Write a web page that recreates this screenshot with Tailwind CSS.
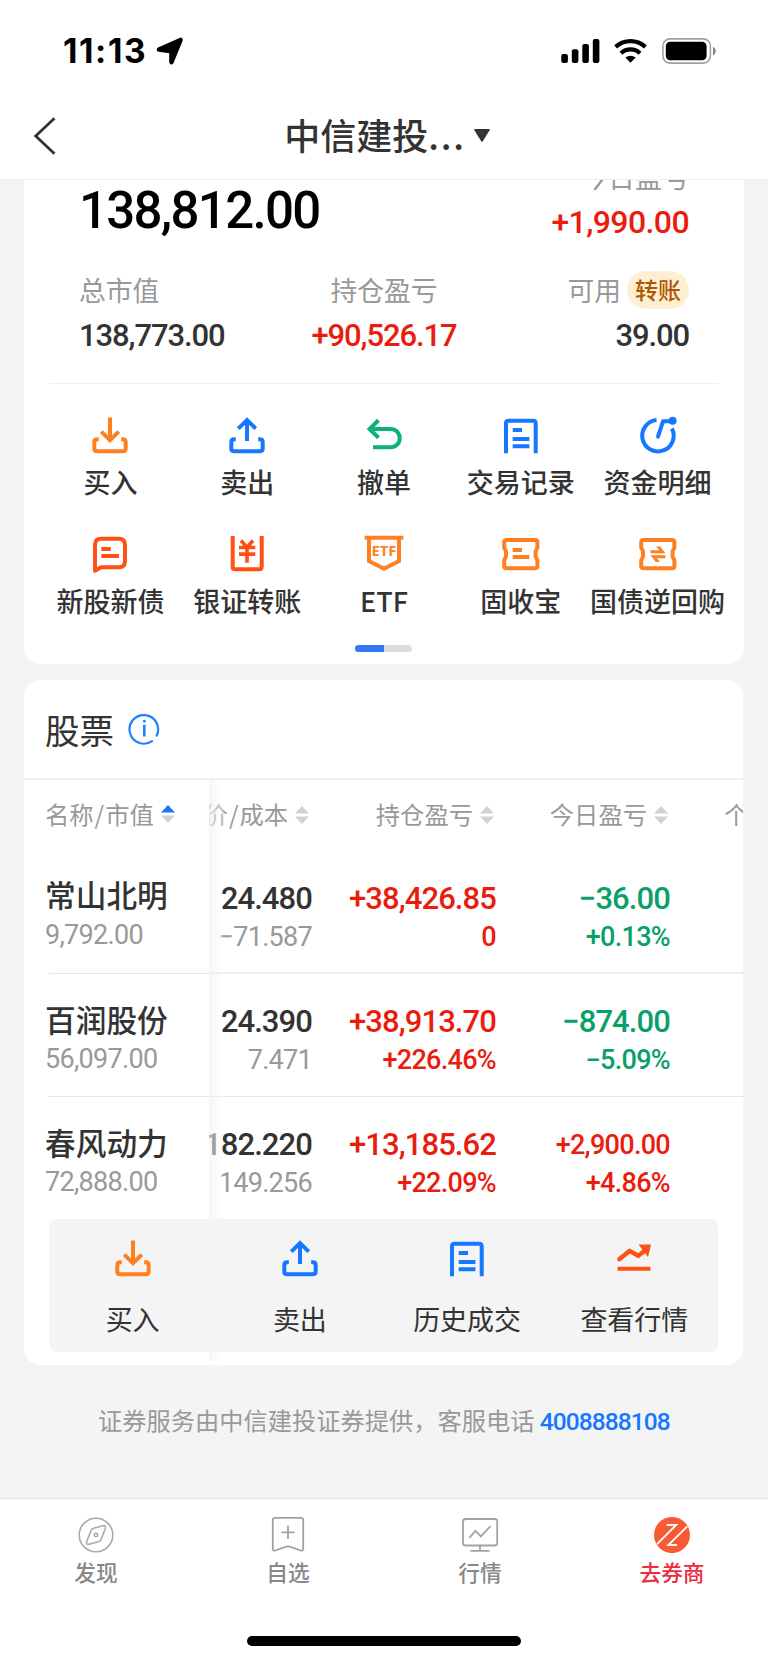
<!DOCTYPE html>
<html lang="zh-CN">
<head>
    <meta charset="UTF-8">
    <meta name="viewport" content="width=device-width, initial-scale=1.0">
    <title>中信建投</title>
    <script src="https://cdn.jsdelivr.net/npm/@tailwindcss/browser@4"></script>
</head>
<body class="bg-[#f4f4f4] text-[#333] font-['Noto_Sans_CJK_SC',sans-serif]">

<!-- Shared icons -->
<svg class="hidden">
    <symbol id="icon-buy" viewBox="0 0 40 40">
        <g fill="none" stroke="#ff8020" stroke-width="4">
            <path d="M20 2.5V25"/>
            <path d="M11.3 16.6L20 25.2L28.7 16.6"/>
            <path d="M8.8 24.3H7.3Q4.3 24.3 4.3 27.3V33.5Q4.3 36.3 7.2 36.3H32.8Q35.7 36.3 35.7 33.5V27.3Q35.7 24.3 32.7 24.3H31.2"/>
        </g>
    </symbol>
    <symbol id="icon-sell" viewBox="0 0 40 40">
        <g fill="none" stroke="#1677ff" stroke-width="4">
            <path d="M20 26V5"/>
            <path d="M11.3 13.6L20 5L28.7 13.6"/>
            <path d="M8.8 24.3H7.3Q4.3 24.3 4.3 27.3V33.5Q4.3 36.3 7.2 36.3H32.8Q35.7 36.3 35.7 33.5V27.3Q35.7 24.3 32.7 24.3H31.2"/>
        </g>
    </symbol>
    <symbol id="icon-record" viewBox="0 0 40 40">
        <g fill="none" stroke="#1677ff" stroke-width="4">
            <path d="M5 38.3V8.2Q5 5.7 7.5 5.7H32.3Q34.7 5.7 34.7 8.2V38.3"/>
            <path d="M11.7 15H21M11.7 24H28.4M11.7 31.2H28.4"/>
        </g>
    </symbol>
    <symbol id="icon-sort" viewBox="0 0 14 18">
        <path d="M7 0L14 7.5H0z"/>
        <path d="M0 10.5H14L7 18z" fill="#d2d2d2"/>
    </symbol>
</svg>

<div class="w-[768px] h-[1663px] flex flex-col overflow-hidden">

    <!-- Status bar -->
    <header class="bg-white h-[180px] shrink-0 border-b border-[#eeeeee]">
        <div class="h-[102px] pl-[63px] pr-[52px] flex items-center justify-between text-black">
            <div class="flex items-center gap-[9px]">
                <span class="font-['Inter'] font-bold text-[33.5px] leading-10 tracking-[1.6px]">11:13</span>
                <svg class="w-7 h-7" viewBox="0 0 28 28"><path d="M3 12.5L24.5 3L15.5 25V14.2Z" stroke="#000" stroke-width="4.6" stroke-linejoin="round"/></svg>
            </div>
            <div class="flex items-center">
                <svg class="w-[39px] h-6" viewBox="0 0 39 24">
                    <rect x="0.3" y="15" width="6.6" height="9" rx="2"/>
                    <rect x="10.8" y="10.3" width="6.6" height="13.7" rx="2"/>
                    <rect x="21.3" y="5" width="6.6" height="19" rx="2"/>
                    <rect x="31.8" y="0" width="6.6" height="24" rx="2"/>
                </svg>
                <svg class="w-[33px] h-6 ml-[14px]" viewBox="0 0 33 24" fill="none" stroke="#000">
                    <path d="M1.6 7.9Q8 2.2 16.5 2.2T31.4 7.9" stroke-width="4.2"/>
                    <path d="M7 14.2Q11 10.3 16.5 10.3T26 14.2" stroke-width="4.2"/>
                    <path d="M11.3 18.5Q16.5 14.8 21.7 18.5L16.5 23.8z" fill="#000" stroke="none"/>
                </svg>
                <svg class="w-[54px] h-[26px] ml-[15px]" viewBox="0 0 54 26">
                    <rect x="0.9" y="0.9" width="47.5" height="24.2" rx="7" fill="none" stroke="#a0a0a0" stroke-width="1.6"/>
                    <rect x="3.8" y="3.8" width="40.8" height="18.4" rx="4.5"/>
                    <path d="M51 8.5Q53.8 10 53.8 13T51 17.5z" fill="#888"/>
                </svg>
            </div>
        </div>
        <div class="h-[67px] px-[33px] grid grid-cols-[1fr_auto_1fr] items-center">
            <svg class="w-[23px] h-[38px]" viewBox="0 0 23 38" fill="none" stroke="#333" stroke-width="2.8"><path d="M21.5 1.3L2.7 19L21.5 36.7"/></svg>
            <h1 class="flex items-center pl-[6px] pb-[3px] text-[36px] leading-[50px] font-medium">
                <span>中信建投</span><span class="tracking-[1.7px]">...</span>
                <svg class="w-4 h-[13px] ml-2 mt-[2px]" viewBox="0 0 16 13" fill="#333"><path d="M1 0H15Q16.3 0 15.6 1.2L8.8 12.3Q8 13.3 7.2 12.3L0.4 1.2Q-0.3 0 1 0z"/></svg>
            </h1>
        </div>
    </header>

    <main class="h-[1318px] shrink-0 px-6 overflow-hidden">

        <!-- Account summary -->
        <section class="h-[484px] bg-white rounded-b-2xl">
            <div class="h-[61px] px-[55px] flex justify-between">
                <div class="h-[62px] leading-[62px] text-[51px] tracking-[-1.7px] font-medium text-black font-['Roboto']">138,812.00</div>
                <div class="-mt-[17px] text-right">
                    <div class="h-[27px] leading-[27px] text-[27px] text-[#999]">今日盈亏</div>
                    <div class="mt-[12px] h-10 leading-10 text-[32px] tracking-[-0.6px] font-medium text-[#ea1c0d] font-['Roboto']">+1,990.00</div>
                </div>
            </div>

            <div class="mt-[29px] px-[55px] grid grid-cols-3">
                <div>
                    <div class="h-10 leading-10 text-[26.8px] text-[#999]">总市值</div>
                    <div class="mt-[11px] h-[30px] leading-[30px] text-[31px] tracking-[-1.1px] font-medium font-['Roboto']">138,773.00</div>
                </div>
                <div class="text-center">
                    <div class="h-10 leading-10 text-[26.8px] text-[#999]">持仓盈亏</div>
                    <div class="mt-[11px] h-[30px] leading-[30px] text-[31px] tracking-[-1.1px] font-medium text-[#ea1c0d] font-['Roboto']">+90,526.17</div>
                </div>
                <div class="text-right">
                    <div class="h-10 flex items-center justify-end gap-[6px] leading-10 text-[26.8px] text-[#999]">
                        <span>可用</span>
                        <span class="w-[62px] h-[38px] leading-[36px] rounded-full bg-[#feefd3] text-center text-[23px] font-medium text-[#ad5700]">转账</span>
                    </div>
                    <div class="mt-[11px] h-[30px] leading-[30px] text-[31px] tracking-[-1.1px] font-medium font-['Roboto']">39.00</div>
                </div>
            </div>

            <div class="mt-[32px] mx-[25px] h-px bg-[#eeeeee]"></div>

            <div class="mt-[31px] mx-[18px] grid grid-cols-5 gap-y-[37px] text-[27px] leading-[31px] font-medium whitespace-nowrap">
                <div class="flex flex-col items-center gap-[11px]">
                    <svg class="w-10 h-10"><use href="#icon-buy"/></svg>
                    <span>买入</span>
                </div>
                <div class="flex flex-col items-center gap-[11px]">
                    <svg class="w-10 h-10"><use href="#icon-sell"/></svg>
                    <span>卖出</span>
                </div>
                <div class="flex flex-col items-center gap-[11px]">
                    <svg class="w-10 h-10" viewBox="0 0 40 40" fill="none" stroke="#0eb07b" stroke-width="4">
                        <path d="M14.5 5.3L5.6 14L14.5 22.7"/>
                        <path d="M6 14H26.6A9.15 9.15 0 0 1 26.6 32.3H9"/>
                    </svg>
                    <span>撤单</span>
                </div>
                <div class="flex flex-col items-center gap-[11px]">
                    <svg class="w-10 h-10"><use href="#icon-record"/></svg>
                    <span>交易记录</span>
                </div>
                <div class="flex flex-col items-center gap-[11px]">
                    <svg class="w-10 h-10" viewBox="0 0 40 40" fill="none" stroke="#1677ff" stroke-width="4">
                        <path d="M18.5 5.1A15.7 15.7 0 1 0 33.9 13.5"/>
                        <path d="M20 21.7L25 6.3H34" stroke-linecap="round" stroke-linejoin="round"/>
                        <circle cx="34.6" cy="5.8" r="4" fill="#1677ff" stroke="none"/>
                    </svg>
                    <span>资金明细</span>
                </div>
                <div class="flex flex-col items-center gap-[11px]">
                    <svg class="w-10 h-10" viewBox="0 0 40 40" fill="none" stroke="#ff5015" stroke-width="4">
                        <path d="M5 36.7V11Q5 4.7 11 4.7H29Q35 4.7 35 11V27Q35 33.3 29 33.3H11Z" stroke-linejoin="round"/>
                        <path d="M11.3 15H20.7M11.3 22H29"/>
                    </svg>
                    <span>新股新债</span>
                </div>
                <div class="flex flex-col items-center gap-[11px]">
                    <svg class="w-10 h-10" viewBox="0 0 40 40" fill="none" stroke="#ff5015" stroke-width="4">
                        <path d="M5.7 2V32.7Q5.7 35.3 8.3 35.3H32.1Q34.7 35.3 34.7 32.7V2"/>
                        <path d="M14 6.5L20 13.5L26 6.5M20 13V28.7M12 13.5H28.3M12 20.2H28.3" stroke-width="3.7"/>
                    </svg>
                    <span>银证转账</span>
                </div>
                <div class="flex flex-col items-center gap-[11px]">
                    <svg class="w-10 h-10" viewBox="0 0 40 40" fill="none" stroke="#ff8020" stroke-width="4">
                        <path d="M0.7 3.8H39.3"/>
                        <path d="M5 4V27L20 34.7L35 27V4"/>
                        <text x="20" y="22" text-anchor="middle" textLength="25" lengthAdjust="spacingAndGlyphs" fill="#ff8020" stroke="none" class="font-['Open_Sans'] font-bold text-[13.5px]">ETF</text>
                    </svg>
                    <span>ETF</span>
                </div>
                <div class="flex flex-col items-center gap-[11px]">
                    <svg class="w-10 h-10" viewBox="0 0 40 40" fill="none" stroke="#ff8020" stroke-width="4" stroke-linejoin="round">
                        <path d="M5.6 6H34Q36.4 6 36.4 8.4V13.6L34.6 17.5V22.5L36.4 26.4V32Q36.4 34.3 34 34.3H5.6Q3.2 34.3 3.2 32V26.4L5 22.5V17.5L3.2 13.6V8.4Q3.2 6 5.6 6z"/>
                        <path d="M11.7 16H21M11.7 23H28.4"/>
                    </svg>
                    <span>固收宝</span>
                </div>
                <div class="flex flex-col items-center gap-[11px]">
                    <svg class="w-10 h-10" viewBox="0 0 40 40" fill="none" stroke="#ff8020" stroke-width="4" stroke-linejoin="round">
                        <path d="M5.6 6H34Q36.4 6 36.4 8.4V13.6L34.6 17.5V22.5L36.4 26.4V32Q36.4 34.3 34 34.3H5.6Q3.2 34.3 3.2 32V26.4L5 22.5V17.5L3.2 13.6V8.4Q3.2 6 5.6 6z"/>
                        <path d="M12.5 16.2H21.3L18 12.5H22.3L27.5 19.3H12.5zM27.5 24.3H18.7L22 28H17.7L12.5 21.2H27.5z" fill="#ff8020" stroke="none"/>
                    </svg>
                    <span>国债逆回购</span>
                </div>
            </div>

            <div class="mt-[29px] ml-[331px] w-[57px] h-[7px] rounded-sm bg-[#dddddd] overflow-hidden">
                <div class="w-[29px] h-full bg-[#3478f6]"></div>
            </div>
        </section>

        <!-- Holdings -->
        <section class="mt-4 w-[719px] h-[685px] bg-white rounded-2xl">
            <div class="h-[98px] pl-[21px] flex items-center gap-[14px]">
                <h2 class="text-[34.5px] leading-[50px]">股票</h2>
                <svg class="w-8 h-8" viewBox="0 0 32 32" fill="none" stroke="#1f80ff" stroke-width="2.2">
                    <path d="M24 28.1A14.3 14.3 0 1 1 28.7 22.6" stroke-linecap="round"/>
                    <path d="M16.3 11.8V23.5" stroke-width="2.6"/>
                    <circle cx="16.3" cy="8.2" r="1.4" fill="#1f80ff" stroke="none"/>
                </svg>
            </div>

            <div class="relative h-[583px] border-t-2 border-[#f0f0f0] flex">
                <!-- Fixed name column -->
                <div class="w-[185px] shrink-0">
                    <div class="h-[72px] pb-[4px] pl-[21px] flex items-center gap-[7px] text-[24.3px] text-[#999]">
                        <span class="leading-[30px]">名称<span class="px-[1px]">/</span>市值</span>
                        <svg class="w-[14px] h-[18px]" fill="#1677ff"><use href="#icon-sort"/></svg>
                    </div>
                    <div class="h-[121px] pl-[21px] pt-[22px]">
                        <div class="h-10 leading-10 text-[30.7px] font-medium">常山北明</div>
                        <div class="h-[38px] leading-[38px] pt-[2px] text-[27px] tracking-[-0.7px] text-[#999] font-['Roboto']">9,792.00</div>
                    </div>
                    <div class="ml-[25px] h-px bg-[#e6e6e6]"></div>
                    <div class="h-[122px] pl-[21px] pt-[25px]">
                        <div class="h-10 leading-10 text-[30.7px] font-medium">百润股份</div>
                        <div class="h-[38px] leading-[38px] pt-px text-[27px] tracking-[-0.7px] text-[#999] font-['Roboto']">56,097.00</div>
                    </div>
                    <div class="ml-[25px] h-px bg-[#e6e6e6]"></div>
                    <div class="pl-[21px] pt-[25px]">
                        <div class="h-10 leading-10 text-[30.7px] font-medium">春风动力</div>
                        <div class="h-[38px] leading-[38px] pt-px text-[27px] tracking-[-0.7px] text-[#999] font-['Roboto']">72,888.00</div>
                    </div>
                </div>

                <!-- Scrolled columns -->
                <div class="w-[534px] shrink-0 overflow-hidden">
                    <div class="h-[72px] pb-[4px] flex items-center text-[24.3px] leading-[30px] text-[#999] whitespace-nowrap">
                        <div class="w-[100px] shrink-0 flex items-center justify-end gap-[7px]"><span>价<span class="px-[1px]">/</span>成本</span><svg class="w-[14px] h-[18px] mt-[2px] shrink-0" fill="#d2d2d2"><use href="#icon-sort"/></svg></div>
                        <div class="w-[185px] shrink-0 flex items-center justify-end gap-[7px]"><span>持仓盈亏</span><svg class="w-[14px] h-[18px] mt-[2px] shrink-0" fill="#d2d2d2"><use href="#icon-sort"/></svg></div>
                        <div class="w-[174px] shrink-0 flex items-center justify-end gap-[7px]"><span>今日盈亏</span><svg class="w-[14px] h-[18px] mt-[2px] shrink-0" fill="#d2d2d2"><use href="#icon-sort"/></svg></div>
                        <div class="pl-[56px] shrink-0">个股</div>
                    </div>
                    <div class="h-[120px] pt-[28px] flex font-['Roboto'] tracking-[-0.9px] text-right font-medium">
                        <div class="w-[103px] shrink-0 flex flex-col items-end">
                            <div class="h-[38px] leading-[38px] text-[31px]">24.480</div>
                            <div class="h-[38px] leading-[38px] text-[27px] tracking-[-0.7px] font-normal text-[#999]">−71.587</div>
                        </div>
                        <div class="w-[184px] shrink-0 text-[#ea1c0d]">
                            <div class="h-[38px] leading-[38px] text-[31px]">+38,426.85</div>
                            <div class="h-[38px] leading-[38px] text-[27px] tracking-[-0.7px]">0</div>
                        </div>
                        <div class="w-[174px] shrink-0 text-[#0b9f6a]">
                            <div class="h-[38px] leading-[38px] text-[31px]">−36.00</div>
                            <div class="h-[38px] leading-[38px] text-[27px] tracking-[-0.7px]">+0.13%</div>
                        </div>
                    </div>
                    <div class="h-[2px] bg-[#ececec]"></div>
                    <div class="h-[122px] pt-[29px] flex font-['Roboto'] tracking-[-0.9px] text-right font-medium">
                        <div class="w-[103px] shrink-0 flex flex-col items-end">
                            <div class="h-[38px] leading-[38px] text-[31px]">24.390</div>
                            <div class="h-[38px] leading-[38px] text-[27px] tracking-[-0.7px] font-normal text-[#999]">7.471</div>
                        </div>
                        <div class="w-[184px] shrink-0 text-[#ea1c0d]">
                            <div class="h-[38px] leading-[38px] text-[31px]">+38,913.70</div>
                            <div class="h-[38px] leading-[38px] text-[27px] tracking-[-0.7px]">+226.46%</div>
                        </div>
                        <div class="w-[174px] shrink-0 text-[#0b9f6a]">
                            <div class="h-[38px] leading-[38px] text-[31px]">−874.00</div>
                            <div class="h-[38px] leading-[38px] text-[27px] tracking-[-0.7px]">−5.09%</div>
                        </div>
                    </div>
                    <div class="h-px bg-[#e6e6e6]"></div>
                    <div class="pt-[29px] flex font-['Roboto'] tracking-[-0.9px] text-right font-medium">
                        <div class="w-[103px] shrink-0 flex flex-col items-end">
                            <div class="h-[38px] leading-[38px] text-[31px]">182.220</div>
                            <div class="h-[38px] leading-[38px] text-[27px] tracking-[-0.7px] font-normal text-[#999]">149.256</div>
                        </div>
                        <div class="w-[184px] shrink-0 text-[#ea1c0d]">
                            <div class="h-[38px] leading-[38px] text-[31px]">+13,185.62</div>
                            <div class="h-[38px] leading-[38px] text-[27px] tracking-[-0.7px]">+22.09%</div>
                        </div>
                        <div class="w-[174px] shrink-0 text-[#ea1c0d]">
                            <div class="h-[38px] leading-[38px] text-[27px] tracking-[-0.7px]">+2,900.00</div>
                            <div class="h-[38px] leading-[38px] text-[27px] tracking-[-0.7px]">+4.86%</div>
                        </div>
                    </div>
                </div>

                <!-- Edge shadow of the fixed column -->
                <div class="absolute left-[185px] top-0 w-[14px] h-full bg-linear-to-r from-[#f2f2f2]/70 to-white/30"></div>

                <!-- Row menu, opened over the table -->
                <div class="absolute left-[25px] top-[439px] w-[669px] h-[133px] rounded-lg bg-[#f4f4f4] grid grid-cols-4 pt-[19px] text-[27px] leading-[36px]">
                    <div class="flex flex-col items-center gap-[23px]">
                        <svg class="w-10 h-10"><use href="#icon-buy"/></svg>
                        <span>买入</span>
                    </div>
                    <div class="flex flex-col items-center gap-[23px]">
                        <svg class="w-10 h-10"><use href="#icon-sell"/></svg>
                        <span>卖出</span>
                    </div>
                    <div class="flex flex-col items-center gap-[23px]">
                        <svg class="w-10 h-10"><use href="#icon-record"/></svg>
                        <span>历史成交</span>
                    </div>
                    <div class="flex flex-col items-center gap-[23px]">
                        <svg class="w-10 h-10" viewBox="0 0 40 40" fill="none" stroke="#ff5015" stroke-width="4">
                            <path d="M5.3 21.2L15.7 12.8L24.3 17.9L33 10.8" stroke-width="4.4" stroke-linecap="round" stroke-linejoin="round"/>
                            <path d="M24.5 6.6H37L34 19z" fill="#ff5015" stroke="none"/>
                            <path d="M3.5 30.8H36.5"/>
                        </svg>
                        <span>查看行情</span>
                    </div>
                </div>
            </div>
        </section>

        <p class="mt-[35px] h-10 flex items-center justify-center gap-[5px] text-[24.25px] leading-10 text-[#999]">
            <span>证券服务由中信建投证券提供，客服电话</span>
            <a href="tel:4008888108" class="pt-[3px] text-[24.5px] tracking-[-0.9px] font-medium text-[#1677ff] font-['Roboto']">4008888108</a>
        </p>
    </main>

    <!-- Tab bar -->
    <nav class="h-[165px] shrink-0 bg-white border-t border-[#e3e3e3] flex flex-col">
        <div class="grid grid-cols-4 pt-4 text-[21.7px] leading-[30px] font-medium text-[#888]">
            <a href="#" class="flex flex-col items-center gap-[2px]">
                <svg class="w-10 h-10" viewBox="0 0 40 40" fill="none" stroke="#aaa" stroke-width="1.6">
                    <circle cx="20" cy="20" r="16.8"/>
                    <path d="M17 13.6L26.7 10.8Q30.5 10 29.3 13.8L25 24.6Q24.4 26 23 26.5L13.2 29.3Q9.6 30 10.8 26.2L15.2 15.3Q15.7 14.1 17 13.6z"/>
                    <circle cx="20" cy="20" r="1.7"/>
                </svg>
                <span>发现</span>
            </a>
            <a href="#" class="flex flex-col items-center gap-[2px]">
                <svg class="w-10 h-10" viewBox="0 0 40 40" fill="none" stroke="#a2a2a2" stroke-width="1.8" stroke-linejoin="round">
                    <path d="M7 2.9H33Q35.2 2.9 35.2 5.1V34Q35.2 36.2 32.8 35.5L21.5 31.6Q20 31.1 18.5 31.6L7.2 35.5Q4.8 36.2 4.8 34V5.1Q4.8 2.9 7 2.9z"/>
                    <path d="M13.3 17.4H26.7M20 10.7V24"/>
                </svg>
                <span>自选</span>
            </a>
            <a href="#" class="flex flex-col items-center gap-[2px]">
                <svg class="w-10 h-10" viewBox="0 0 40 40" fill="none" stroke="#a2a2a2" stroke-width="1.8">
                    <rect x="3" y="4" width="34.2" height="26.5" rx="2.5"/>
                    <path d="M20 30.5V35.7M10.3 35.9H29.4M9.3 22.8L15.5 15.8L20.8 21.4L30.7 11"/>
                </svg>
                <span>行情</span>
            </a>
            <a href="#" class="flex flex-col items-center gap-[2px] text-[#ee2b3e]">
                <svg class="w-10 h-10" viewBox="0 0 40 40" fill="none" stroke="#fff" stroke-width="1.8">
                    <circle cx="20" cy="20" r="18" fill="#f75a35" stroke="none"/>
                    <path d="M14.7 10H24.3L5 29.2M35.3 11.3L16.3 30H25"/>
                </svg>
                <span>去券商</span>
            </a>
        </div>
        <div class="mt-[49px] ml-[247px] w-[274px] h-[10px] rounded-full bg-black"></div>
    </nav>

</div>

</body>
</html>
